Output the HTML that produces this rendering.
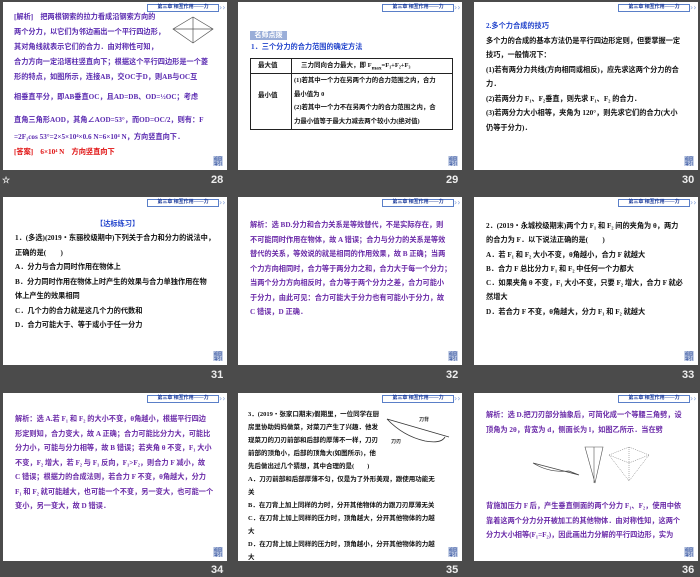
<!DOCTYPE html>
<html><head><meta charset="utf-8"><style>
*{margin:0;padding:0;box-sizing:border-box}
body{width:700px;height:577px;background:#4b4b4b;position:relative;overflow:hidden;font-family:"Liberation Serif","Noto Sans CJK SC",sans-serif;font-weight:bold}
.s{position:absolute;width:224px;height:168px;background:#fff;overflow:hidden}
.tab{position:absolute;left:144px;top:2px;width:72px;height:8px;border:1px solid #5a7fc8;font-size:5px;line-height:6px;color:#1a3a9a;text-align:center;background:#fff}
.chev{position:absolute;left:216px;top:1px;font-size:8px;color:#8aa6dd;line-height:9px;font-family:"DejaVu Sans",sans-serif;font-weight:normal}
.btn{position:absolute;right:4px;bottom:4px;width:10px;height:10px;background:#c9d3e8;font-size:4px;line-height:5px;color:#2a4a9a;text-align:center}
.t{position:absolute;font-size:7.2px;white-space:nowrap;line-height:14px}
.n{position:absolute;color:#eee;font-size:11px;font-family:"Liberation Sans",sans-serif;font-weight:bold}
.p{color:#6a2aa8}.k{color:#111}.b{color:#2244cc}
</style></head><body>

<!-- 28 -->
<div class="s" style="left:3px;top:2px">
<div class="tab">第三章 相互作用——力</div><div class="chev">››</div>
<svg style="position:absolute;left:167px;top:11px" width="46" height="34"><path d="M3 16L23 4L43 16L23 30Z M23 4V30 M3 16H43" stroke="#555" stroke-width=".7" fill="none"/></svg>
<div class="t p" style="left:11px;top:8px;line-height:15px;color:#5a2ab0">[解析]　把两根钢索的拉力看成沿钢索方向的<br>两个分力，以它们为邻边画出一个平行四边形，<br>其对角线就表示它们的合力．由对称性可知，<br>合力方向一定沿塔柱竖直向下；根据这个平行四边形是一个菱<br>形的特点，如图所示，连接AB，交OC于D，则AB与OC互<br><span style="line-height:25px">相垂直平分，即AB垂直OC，且AD=DB、OD=½OC；考虑</span><br><span style="line-height:20px">直角三角形AOD，其角∠AOD=53°，而OD=OC/2，则有：F</span><br>=2F₁cos 53°=2×5×10⁴×0.6 N=6×10⁴ N，方向竖直向下．<br><span style="color:#e01010">[答案]　6×10⁴ N　方向竖直向下</span></div>
<div class="btn">返回<br>导引</div></div>
<div class="n" style="left:2px;top:175px;font-size:9px">☆</div>
<div class="n" style="left:211px;top:174px">28</div>

<!-- 29 -->
<div class="s" style="left:238px;top:2px">
<div class="tab">第三章 相互作用——力</div><div class="chev">››</div>
<div style="position:absolute;left:12px;top:29px;width:37px;height:9px;background:#9aaed8;color:#fff;font-size:7px;line-height:9px;text-align:center">名师点拨</div>
<div class="t b" style="left:13px;top:38px">1．三个分力的合力范围的确定方法</div>
<div style="position:absolute;left:12px;top:56px;width:203px;height:72px;border:1px solid #222">
<div style="position:absolute;left:40px;top:0;bottom:0;border-left:1px solid #222"></div>
<div style="position:absolute;left:0;right:0;top:14px;border-top:1px solid #222"></div>
<div class="t k" style="left:7px;top:0;font-size:6.5px">最大值</div>
<div class="t k" style="left:50px;top:0;font-size:6.5px">三力同向合力最大，即 F<sub>max</sub>=F₁+F₂+F₃</div>
<div class="t k" style="left:7px;top:30px;font-size:6.5px">最小值</div>
<div class="t k" style="left:43px;top:15px;font-size:6.4px;line-height:13.5px">(1)若其中一个力在另两个力的合力范围之内，合力<br>最小值为 0<br>(2)若其中一个力不在另两个力的合力范围之内，合<br>力最小值等于最大力减去两个较小力(绝对值)</div>
</div>
<div class="btn">返回<br>导引</div></div>
<div class="n" style="left:446px;top:174px">29</div>

<!-- 30 -->
<div class="s" style="left:474px;top:2px">
<div class="tab">第三章 相互作用——力</div><div class="chev">››</div>
<div class="t k" style="left:12px;top:17px;line-height:14.5px"><span class="b">2.多个力合成的技巧</span><br>多个力的合成的基本方法仍是平行四边形定则，但要掌握一定<br>技巧，一般情况下：<br>(1)若有两分力共线(方向相同或相反)，应先求这两个分力的合<br>力．<br>(2)若两分力 F₁、F₂垂直，则先求 F₁、F₂ 的合力．<br>(3)若两分力大小相等，夹角为 120°，则先求它们的合力(大小<br>仍等于分力)．</div>
<div class="btn">返回<br>导引</div></div>
<div class="n" style="left:682px;top:174px">30</div>

<!-- 31 -->
<div class="s" style="left:3px;top:197px">
<div class="tab">第三章 相互作用——力</div><div class="chev">››</div>
<div class="t b" style="left:93px;top:20px">【达标练习】</div>
<div class="t k" style="left:12px;top:34px;line-height:14.5px">1．(多选)(2019・东丽校级期中)下列关于合力和分力的说法中，<br>正确的是(　　)<br>A．分力与合力同时作用在物体上<br>B．分力同时作用在物体上时产生的效果与合力单独作用在物<br>体上产生的效果相同<br>C．几个力的合力就是这几个力的代数和<br>D．合力可能大于、等于或小于任一分力</div>
<div class="btn">返回<br>导引</div></div>
<div class="n" style="left:211px;top:369px">31</div>

<!-- 32 -->
<div class="s" style="left:238px;top:197px">
<div class="tab">第三章 相互作用——力</div><div class="chev">››</div>
<div class="t p" style="left:12px;top:21px;line-height:14.5px">解析：选 BD.分力和合力关系是等效替代，不是实际存在，则<br>不可能同时作用在物体，故 A 错误；合力与分力的关系是等效<br>替代的关系，等效说的就是相同的作用效果，故 B 正确；当两<br>个力方向相同时，合力等于两分力之和，合力大于每一个分力；<br>当两个分力方向相反时，合力等于两个分力之差，合力可能小<br>于分力，由此可见：合力可能大于分力也有可能小于分力，故<br>C 错误，D 正确．</div>
<div class="btn">返回<br>导引</div></div>
<div class="n" style="left:446px;top:369px">32</div>

<!-- 33 -->
<div class="s" style="left:474px;top:197px">
<div class="tab">第三章 相互作用——力</div><div class="chev">››</div>
<div class="t k" style="left:12px;top:22px;line-height:14.3px">2．(2019・永城校级期末)两个力 F₁ 和 F₂ 间的夹角为 θ，两力<br>的合力为 F．以下说法正确的是(　　)<br>A．若 F₁ 和 F₂ 大小不变，θ角越小，合力 F 就越大<br>B．合力 F 总比分力 F₁ 和 F₂ 中任何一个力都大<br>C．如果夹角 θ 不变，F₁ 大小不变，只要 F₂ 增大，合力 F 就必<br>然增大<br>D．若合力 F 不变，θ角越大，分力 F₁ 和 F₂ 就越大</div>
<div class="btn">返回<br>导引</div></div>
<div class="n" style="left:682px;top:369px">33</div>

<!-- 34 -->
<div class="s" style="left:3px;top:393px">
<div class="tab">第三章 相互作用——力</div><div class="chev">››</div>
<div class="t p" style="left:12px;top:19px;line-height:14.5px">解析：选 A.若 F₁ 和 F₂ 的大小不变，θ角越小，根据平行四边<br>形定则知，合力变大，故 A 正确；合力可能比分力大，可能比<br>分力小，可能与分力相等，故 B 错误；若夹角 θ 不变，F₁ 大小<br>不变，F₂ 增大，若 F₂ 与 F₁ 反向，F₁&gt;F₂，则合力 F 减小，故<br>C 错误；根据力的合成法则，若合力 F 不变，θ角越大，分力<br>F₁ 和 F₂ 就可能越大，也可能一个不变，另一变大，也可能一个<br>变小，另一变大，故 D 错误．</div>
<div class="btn">返回<br>导引</div></div>
<div class="n" style="left:211px;top:564px">34</div>

<!-- 35 -->
<div class="s" style="left:238px;top:393px">
<div class="tab">第三章 相互作用——力</div><div class="chev">››</div>
<svg style="position:absolute;left:145px;top:18px" width="70" height="40"><path d="M4 8Q20 25 42 30Q58 33 62 26 M4 8L66 26" stroke="#333" stroke-width=".8" fill="none"/><text x="36" y="10" font-size="5" fill="#333">刀背</text><text x="8" y="32" font-size="5" fill="#333">刀刃</text></svg>
<div class="t k" style="left:10px;top:15px;font-size:6.5px;line-height:13px">3．(2019・张家口期末)假期里，一位同学在厨<br>房里协助妈妈做菜，对菜刀产生了兴趣．他发<br>现菜刀的刀刃前部和后部的厚薄不一样，刀刃<br>前部的顶角小，后部的顶角大(如图所示)，他<br>先后做出过几个猜想，其中合理的是(　　)<br>A．刀刃前部和后部厚薄不匀，仅是为了外形美观，跟使用功能无<br>关<br>B．在刀背上加上同样的力时，分开其他物体的力跟刀刃厚薄无关<br>C．在刀背上加上同样的压力时，顶角越大，分开其他物体的力越<br>大<br>D．在刀背上加上同样的压力时，顶角越小，分开其他物体的力越<br>大</div>
<div class="btn">返回<br>导引</div></div>
<div class="n" style="left:446px;top:564px">35</div>

<!-- 36 -->
<div class="s" style="left:474px;top:393px">
<div class="tab">第三章 相互作用——力</div><div class="chev">››</div>
<div class="t p" style="left:12px;top:15px;line-height:14.5px">解析：选 D.把刀刃部分抽象后，可简化成一个等腰三角劈，设<br>顶角为 2θ，背宽为 d，侧面长为 l，如图乙所示．当在劈</div>
<svg style="position:absolute;left:55px;top:50px" width="120" height="50"><path d="M4 20Q20 30 40 28L50 32 M4 20L50 32" stroke="#444" stroke-width=".7" fill="none"/><path d="M56 4H74L66 40Z M65 4V40" stroke="#555" stroke-width=".6" fill="none"/><path d="M80 12L100 4L120 12L100 38Z M100 4V38 M80 12L100 20L120 12" stroke="#666" stroke-width=".5" fill="none" stroke-dasharray="1 1"/></svg>
<div class="t p" style="left:12px;top:106px;line-height:14.5px">背施加压力 F 后，产生垂直侧面的两个分力 F₁、F₂，使用中依<br>靠着这两个分力分开被加工的其他物体．由对称性知，这两个<br>分力大小相等(F₁=F₂)，因此画出力分解的平行四边形，实为</div>
<div class="btn">返回<br>导引</div></div>
<div class="n" style="left:682px;top:564px">36</div>
</body></html>
